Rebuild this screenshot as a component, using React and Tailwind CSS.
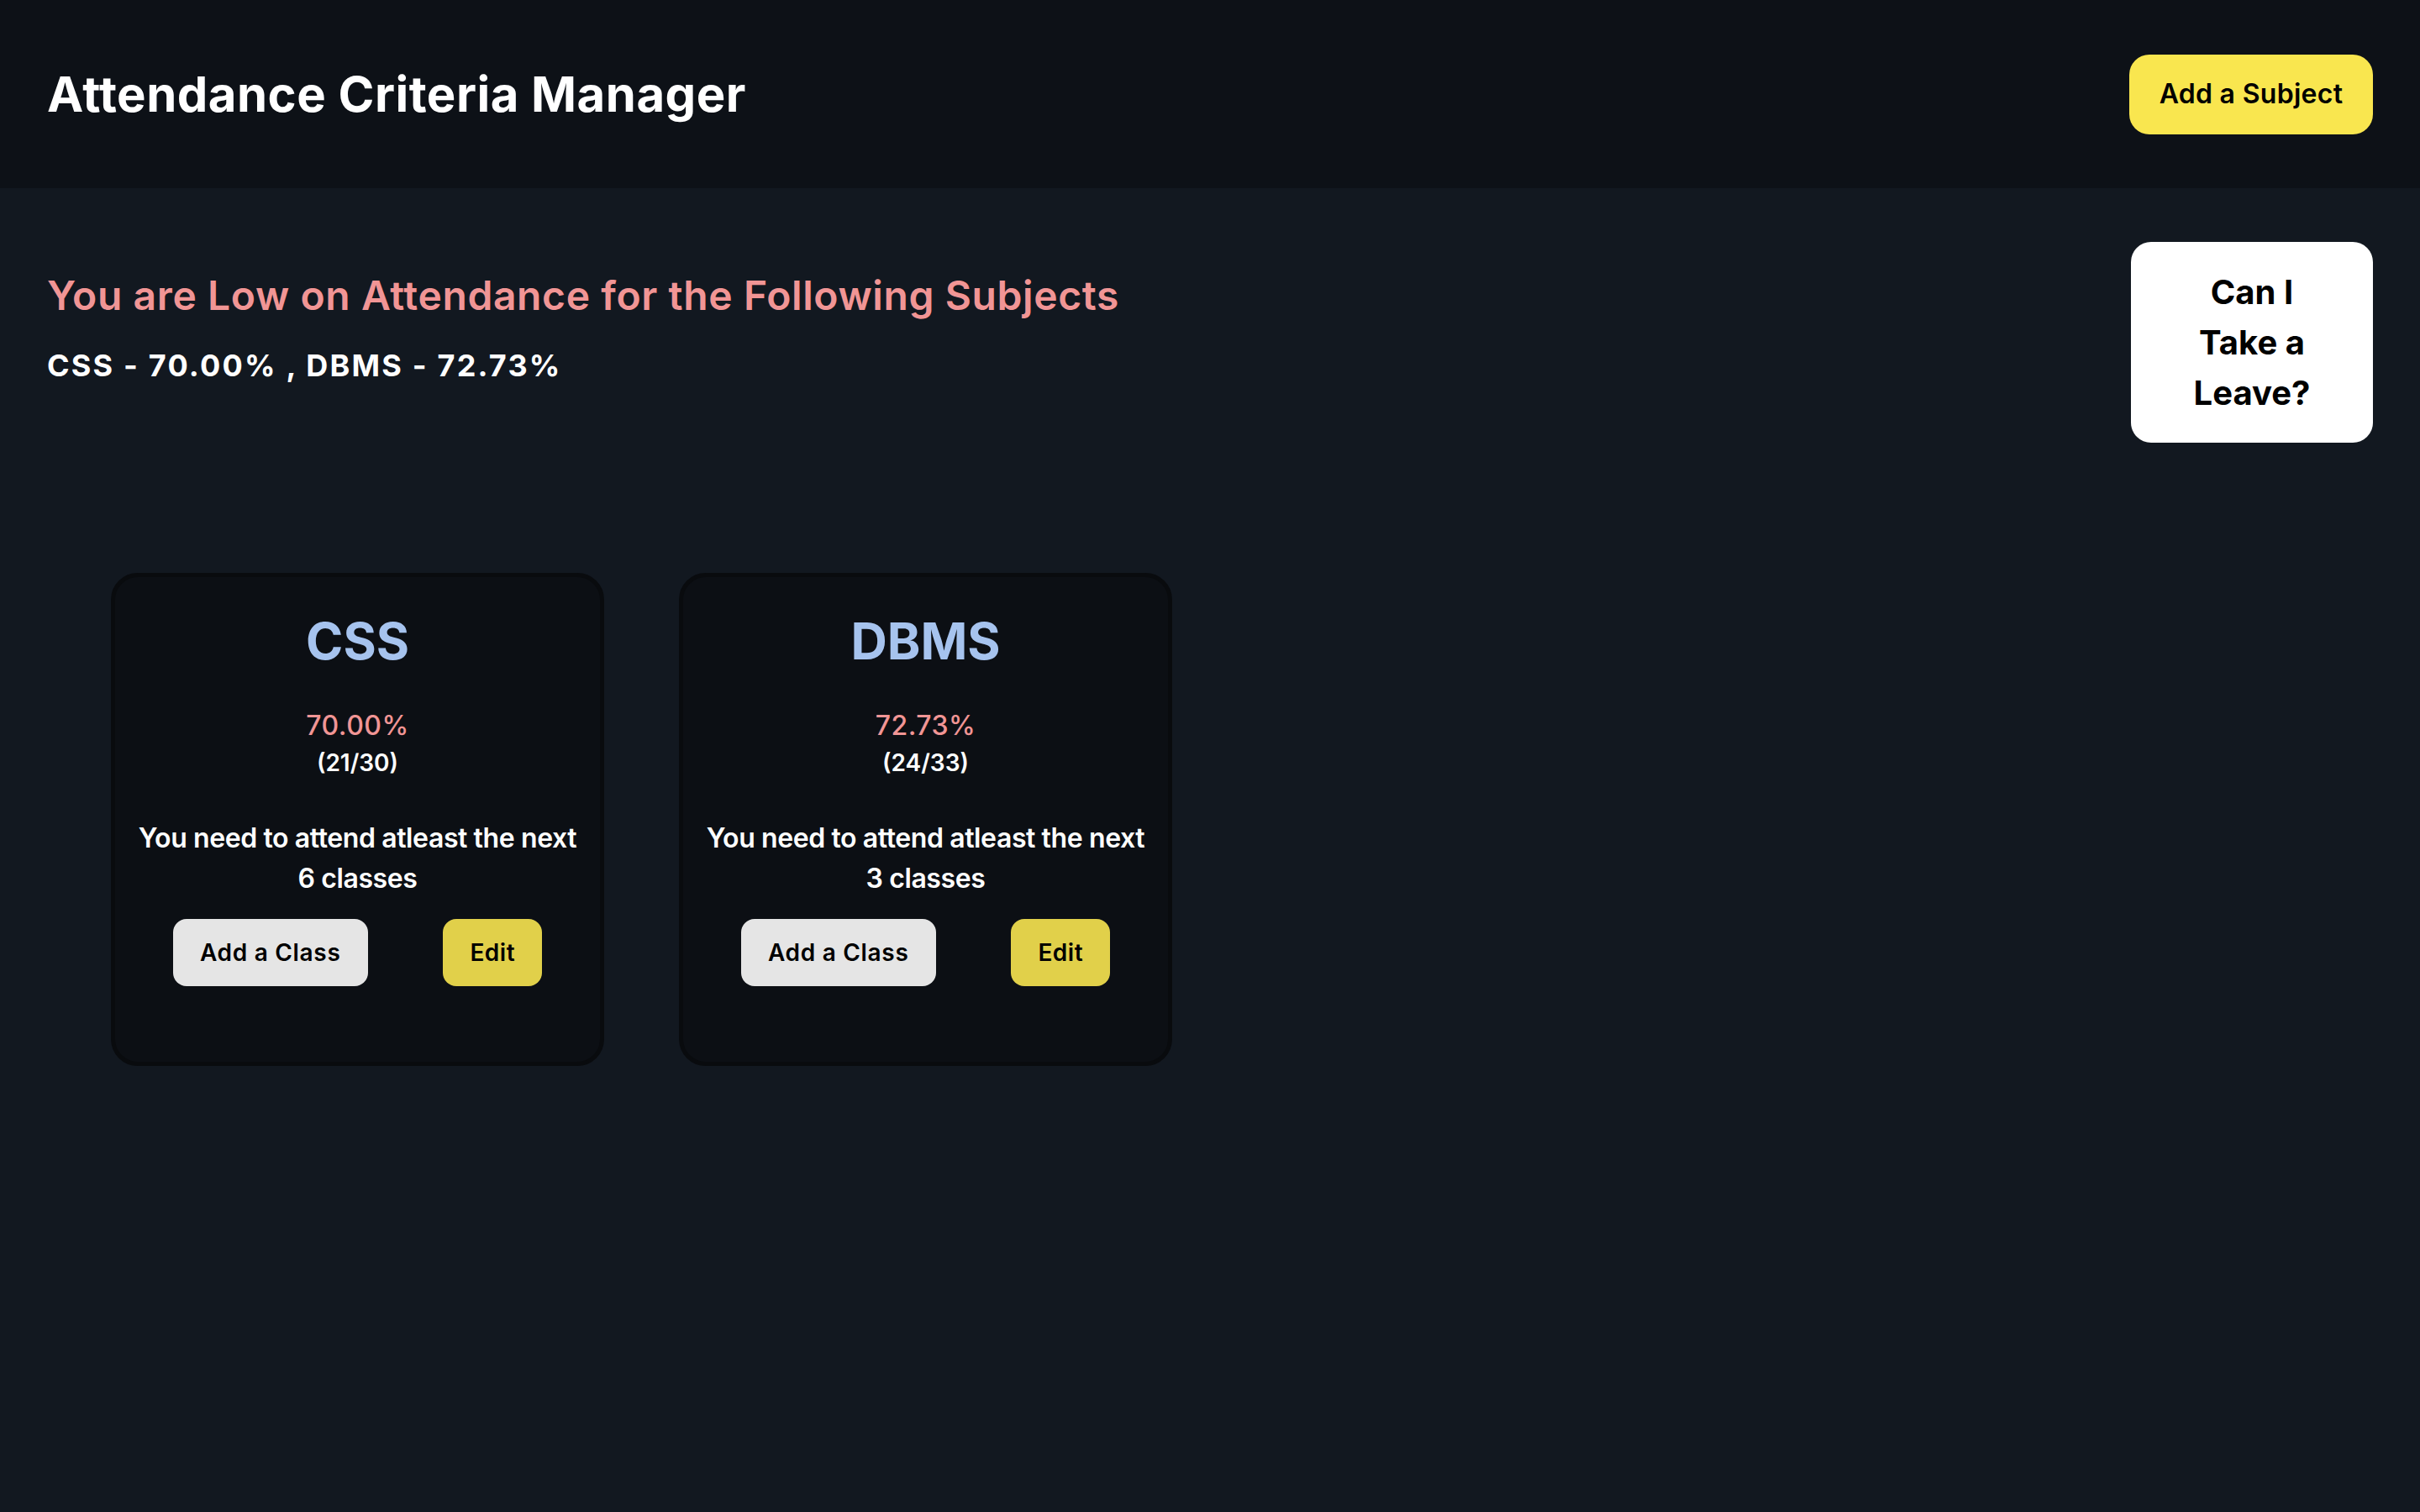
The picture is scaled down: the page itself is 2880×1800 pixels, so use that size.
import React from 'react'

const subjects = [
  { name: 'CSS', pct: '70.00%', attended: 21, total: 30, need: 6 },
  { name: 'DBMS', pct: '72.73%', attended: 24, total: 33, need: 3 },
]

const poppins = "font-['Inter',_'Noto_Sans',_sans-serif]"

function SubjectCard({ s }) {
  return (
    <div className="w-[587px] h-[587px] shrink-0 rounded-[32px] border-[5px] border-[#090b0e] bg-[#0c0f14] px-[24px] pt-[40px] flex flex-col items-center text-center">
      <h2 className="text-[60px] leading-[72px] font-bold text-[#a6c3ee]">{s.name}</h2>
      <p className={`${poppins} mt-[41px] text-[32px] leading-[48px] font-medium text-[#f19595] tracking-[0.5px]`}>{s.pct}</p>
      <p className={`${poppins} text-[28px] leading-[40px] font-semibold text-white`}>
        ({s.attended}/{s.total})
      </p>
      <p className="mt-[46px] text-[32px] leading-[48px] font-semibold text-white tracking-[-0.4px]">
        You need to attend atleast the next {s.need} classes
      </p>
      <div className="mt-[24px] w-full flex justify-around">
        <button className={`${poppins} h-[80px] px-[32px] rounded-[16px] bg-[#e5e5e5] text-black text-[28px] font-semibold tracking-[0.7px]`}>
          Add a Class
        </button>
        <button className={`${poppins} h-[80px] px-[32px] rounded-[16px] bg-[#e1d04a] text-black text-[28px] font-semibold tracking-[0.5px]`}>
          Edit
        </button>
      </div>
    </div>
  )
}

export default function App() {
  return (
    <div className="min-h-screen bg-[#121820] font-['Inter',_sans-serif]">
      {/* Header */}
      <header className="h-[224px] bg-[#0d1117] px-[56px] flex items-center justify-between">
        <h1 className={`${poppins} text-[58px] font-bold text-white tracking-[0.5px]`}>
          Attendance Criteria Manager
        </h1>
        <button className={`${poppins} h-[95px] w-[290px] rounded-[24px] bg-[#f9e64f] text-black text-[32px] font-semibold tracking-[0.3px]`}>
          Add a Subject
        </button>
      </header>

      <main className="px-[56px] pt-[64px]">
        <div className="flex items-start justify-between">
          <div className="pt-[32px]">
            <h2 className="text-[48px] leading-[64px] font-semibold text-[#f19595] tracking-[0.6px]">
              You are Low on Attendance for the Following Subjects
            </h2>
            <p className="mt-[23px] text-[36px] leading-[56px] font-bold text-white tracking-[2.2px]">
              CSS - 70.00% , DBMS - 72.73%
            </p>
          </div>
          <button className={`${poppins} w-[288px] h-[239px] rounded-[24px] bg-white text-black text-[40px] leading-[60px] font-bold`}>
            Can I<br />Take a<br />Leave?
          </button>
        </div>

        <div className="mt-[155px] pl-[76px] flex gap-[89px]">
          {subjects.map((s) => (
            <SubjectCard key={s.name} s={s} />
          ))}
        </div>
      </main>
    </div>
  )
}
